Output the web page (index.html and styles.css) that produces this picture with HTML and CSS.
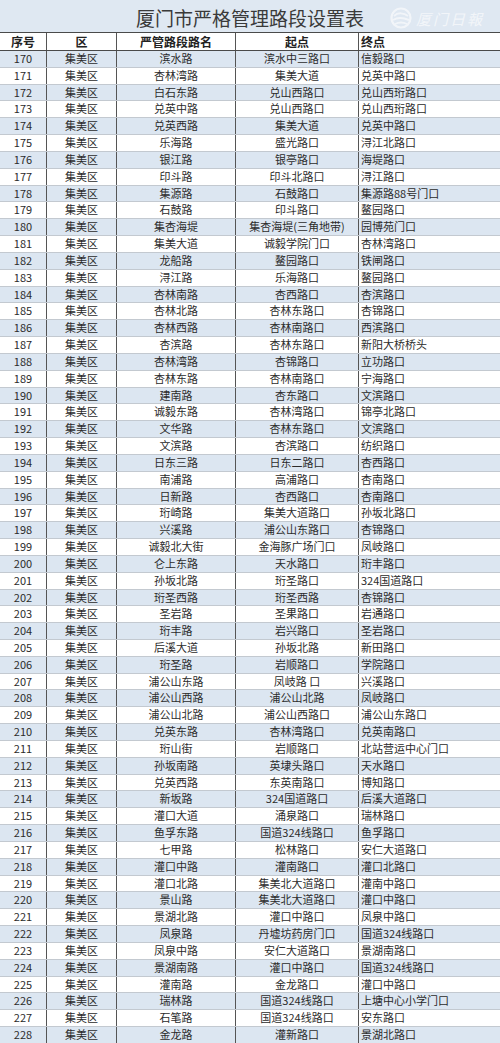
FILE: index.html
```html
<!DOCTYPE html>
<html lang="zh-CN">
<head>
<meta charset="utf-8">
<title>厦门市严格管理路段设置表</title>
<link rel="stylesheet" href="styles.css">
</head>
<body>
<div class="sheet">
  <div class="title-bar">
    <h1 class="title">厦门市严格管理路段设置表</h1>
    <div class="logo">
      <svg class="logo-mark" width="24" height="22" viewBox="0 0 24 22">
        <circle cx="12" cy="11" r="9.5" fill="none" stroke="#ffffff" stroke-width="2.2"/>
        <path d="M5 9 C9 5, 15 6, 19 9" fill="none" stroke="#ffffff" stroke-width="2"/>
        <path d="M4 13 C9 10, 15 11, 20 13" fill="none" stroke="#ffffff" stroke-width="2"/>
        <path d="M6 17 C10 15, 14 15, 18 17" fill="none" stroke="#ffffff" stroke-width="1.8"/>
      </svg>
      <span class="logo-text">厦门日報</span>
    </div>
  </div>
  <div class="row head">
    <div class="c c1">序号</div><div class="c c2">区</div><div class="c c3">严管路段路名</div><div class="c c4">起点</div><div class="c c5">终点</div>
  </div>
  <div class="row alt"><div class="c c1">170</div><div class="c c2">集美区</div><div class="c c3">滨水路</div><div class="c c4">滨水中三路口</div><div class="c c5">信毅路口</div></div>
  <div class="row"><div class="c c1">171</div><div class="c c2">集美区</div><div class="c c3">杏林湾路</div><div class="c c4">集美大道</div><div class="c c5">兑英中路口</div></div>
  <div class="row alt"><div class="c c1">172</div><div class="c c2">集美区</div><div class="c c3">白石东路</div><div class="c c4">兑山西路口</div><div class="c c5">兑山西珩路口</div></div>
  <div class="row"><div class="c c1">173</div><div class="c c2">集美区</div><div class="c c3">兑英中路</div><div class="c c4">兑山西路口</div><div class="c c5">兑山西珩路口</div></div>
  <div class="row alt"><div class="c c1">174</div><div class="c c2">集美区</div><div class="c c3">兑英西路</div><div class="c c4">集美大道</div><div class="c c5">兑英中路口</div></div>
  <div class="row"><div class="c c1">175</div><div class="c c2">集美区</div><div class="c c3">乐海路</div><div class="c c4">盛光路口</div><div class="c c5">浔江北路口</div></div>
  <div class="row alt"><div class="c c1">176</div><div class="c c2">集美区</div><div class="c c3">银江路</div><div class="c c4">银亭路口</div><div class="c c5">海堤路口</div></div>
  <div class="row"><div class="c c1">177</div><div class="c c2">集美区</div><div class="c c3">印斗路</div><div class="c c4">印斗北路口</div><div class="c c5">浔江路口</div></div>
  <div class="row alt"><div class="c c1">178</div><div class="c c2">集美区</div><div class="c c3">集源路</div><div class="c c4">石鼓路口</div><div class="c c5">集源路88号门口</div></div>
  <div class="row"><div class="c c1">179</div><div class="c c2">集美区</div><div class="c c3">石鼓路</div><div class="c c4">印斗路口</div><div class="c c5">鳌园路口</div></div>
  <div class="row alt"><div class="c c1">180</div><div class="c c2">集美区</div><div class="c c3">集杏海堤</div><div class="c c4">集杏海堤(三角地带)</div><div class="c c5">园博苑门口</div></div>
  <div class="row"><div class="c c1">181</div><div class="c c2">集美区</div><div class="c c3">集美大道</div><div class="c c4">诚毅学院门口</div><div class="c c5">杏林湾路口</div></div>
  <div class="row alt"><div class="c c1">182</div><div class="c c2">集美区</div><div class="c c3">龙船路</div><div class="c c4">鳌园路口</div><div class="c c5">铁闸路口</div></div>
  <div class="row"><div class="c c1">183</div><div class="c c2">集美区</div><div class="c c3">浔江路</div><div class="c c4">乐海路口</div><div class="c c5">鳌园路口</div></div>
  <div class="row alt"><div class="c c1">184</div><div class="c c2">集美区</div><div class="c c3">杏林南路</div><div class="c c4">杏西路口</div><div class="c c5">杏滨路口</div></div>
  <div class="row"><div class="c c1">185</div><div class="c c2">集美区</div><div class="c c3">杏林北路</div><div class="c c4">杏林东路口</div><div class="c c5">杏锦路口</div></div>
  <div class="row alt"><div class="c c1">186</div><div class="c c2">集美区</div><div class="c c3">杏林西路</div><div class="c c4">杏林南路口</div><div class="c c5">西滨路口</div></div>
  <div class="row"><div class="c c1">187</div><div class="c c2">集美区</div><div class="c c3">杏滨路</div><div class="c c4">杏林东路口</div><div class="c c5">新阳大桥桥头</div></div>
  <div class="row alt"><div class="c c1">188</div><div class="c c2">集美区</div><div class="c c3">杏林湾路</div><div class="c c4">杏锦路口</div><div class="c c5">立功路口</div></div>
  <div class="row"><div class="c c1">189</div><div class="c c2">集美区</div><div class="c c3">杏林东路</div><div class="c c4">杏林南路口</div><div class="c c5">宁海路口</div></div>
  <div class="row alt"><div class="c c1">190</div><div class="c c2">集美区</div><div class="c c3">建南路</div><div class="c c4">杏东路口</div><div class="c c5">文滨路口</div></div>
  <div class="row"><div class="c c1">191</div><div class="c c2">集美区</div><div class="c c3">诚毅东路</div><div class="c c4">杏林湾路口</div><div class="c c5">锦亭北路口</div></div>
  <div class="row alt"><div class="c c1">192</div><div class="c c2">集美区</div><div class="c c3">文华路</div><div class="c c4">杏林东路口</div><div class="c c5">文滨路口</div></div>
  <div class="row"><div class="c c1">193</div><div class="c c2">集美区</div><div class="c c3">文滨路</div><div class="c c4">杏滨路口</div><div class="c c5">纺织路口</div></div>
  <div class="row alt"><div class="c c1">194</div><div class="c c2">集美区</div><div class="c c3">日东三路</div><div class="c c4">日东二路口</div><div class="c c5">杏西路口</div></div>
  <div class="row"><div class="c c1">195</div><div class="c c2">集美区</div><div class="c c3">南浦路</div><div class="c c4">高浦路口</div><div class="c c5">杏南路口</div></div>
  <div class="row alt"><div class="c c1">196</div><div class="c c2">集美区</div><div class="c c3">日新路</div><div class="c c4">杏西路口</div><div class="c c5">杏南路口</div></div>
  <div class="row"><div class="c c1">197</div><div class="c c2">集美区</div><div class="c c3">珩崎路</div><div class="c c4">集美大道路口</div><div class="c c5">孙坂北路口</div></div>
  <div class="row alt"><div class="c c1">198</div><div class="c c2">集美区</div><div class="c c3">兴溪路</div><div class="c c4">浦公山东路口</div><div class="c c5">杏锦路口</div></div>
  <div class="row"><div class="c c1">199</div><div class="c c2">集美区</div><div class="c c3">诚毅北大街</div><div class="c c4">金海豚广场门口</div><div class="c c5">凤岐路口</div></div>
  <div class="row alt"><div class="c c1">200</div><div class="c c2">集美区</div><div class="c c3">仑上东路</div><div class="c c4">天水路口</div><div class="c c5">珩丰路口</div></div>
  <div class="row"><div class="c c1">201</div><div class="c c2">集美区</div><div class="c c3">孙坂北路</div><div class="c c4">珩圣路口</div><div class="c c5">324国道路口</div></div>
  <div class="row alt"><div class="c c1">202</div><div class="c c2">集美区</div><div class="c c3">珩圣西路</div><div class="c c4">珩圣西路</div><div class="c c5">杏锦路口</div></div>
  <div class="row"><div class="c c1">203</div><div class="c c2">集美区</div><div class="c c3">圣岩路</div><div class="c c4">圣果路口</div><div class="c c5">岩通路口</div></div>
  <div class="row alt"><div class="c c1">204</div><div class="c c2">集美区</div><div class="c c3">珩丰路</div><div class="c c4">岩兴路口</div><div class="c c5">圣岩路口</div></div>
  <div class="row"><div class="c c1">205</div><div class="c c2">集美区</div><div class="c c3">后溪大道</div><div class="c c4">孙坂北路</div><div class="c c5">新田路口</div></div>
  <div class="row alt"><div class="c c1">206</div><div class="c c2">集美区</div><div class="c c3">珩圣路</div><div class="c c4">岩顺路口</div><div class="c c5">学院路口</div></div>
  <div class="row"><div class="c c1">207</div><div class="c c2">集美区</div><div class="c c3">浦公山东路</div><div class="c c4">凤岐路&nbsp;口</div><div class="c c5">兴溪路口</div></div>
  <div class="row alt"><div class="c c1">208</div><div class="c c2">集美区</div><div class="c c3">浦公山西路</div><div class="c c4">浦公山北路</div><div class="c c5">凤岐路口</div></div>
  <div class="row"><div class="c c1">209</div><div class="c c2">集美区</div><div class="c c3">浦公山北路</div><div class="c c4">浦公山西路口</div><div class="c c5">浦公山东路口</div></div>
  <div class="row alt"><div class="c c1">210</div><div class="c c2">集美区</div><div class="c c3">兑英东路</div><div class="c c4">杏林湾路口</div><div class="c c5">兑英南路口</div></div>
  <div class="row"><div class="c c1">211</div><div class="c c2">集美区</div><div class="c c3">珩山街</div><div class="c c4">岩顺路口</div><div class="c c5">北站营运中心门口</div></div>
  <div class="row alt"><div class="c c1">212</div><div class="c c2">集美区</div><div class="c c3">孙坂南路</div><div class="c c4">英埭头路口</div><div class="c c5">天水路口</div></div>
  <div class="row"><div class="c c1">213</div><div class="c c2">集美区</div><div class="c c3">兑英西路</div><div class="c c4">东英南路口</div><div class="c c5">博知路口</div></div>
  <div class="row alt"><div class="c c1">214</div><div class="c c2">集美区</div><div class="c c3">新坂路</div><div class="c c4">324国道路口</div><div class="c c5">后溪大道路口</div></div>
  <div class="row"><div class="c c1">215</div><div class="c c2">集美区</div><div class="c c3">灌口大道</div><div class="c c4">涌泉路口</div><div class="c c5">瑞林路口</div></div>
  <div class="row alt"><div class="c c1">216</div><div class="c c2">集美区</div><div class="c c3">鱼孚东路</div><div class="c c4">国道324线路口</div><div class="c c5">鱼孚路口</div></div>
  <div class="row"><div class="c c1">217</div><div class="c c2">集美区</div><div class="c c3">七甲路</div><div class="c c4">松林路口</div><div class="c c5">安仁大道路口</div></div>
  <div class="row alt"><div class="c c1">218</div><div class="c c2">集美区</div><div class="c c3">灌口中路</div><div class="c c4">灌南路口</div><div class="c c5">灌口北路口</div></div>
  <div class="row"><div class="c c1">219</div><div class="c c2">集美区</div><div class="c c3">灌口北路</div><div class="c c4">集美北大道路口</div><div class="c c5">灌南中路口</div></div>
  <div class="row alt"><div class="c c1">220</div><div class="c c2">集美区</div><div class="c c3">景山路</div><div class="c c4">集美北大道路口</div><div class="c c5">灌口中路口</div></div>
  <div class="row"><div class="c c1">221</div><div class="c c2">集美区</div><div class="c c3">景湖北路</div><div class="c c4">灌口中路口</div><div class="c c5">凤泉中路口</div></div>
  <div class="row alt"><div class="c c1">222</div><div class="c c2">集美区</div><div class="c c3">凤泉路</div><div class="c c4">丹墟坊药房门口</div><div class="c c5">国道324线路口</div></div>
  <div class="row"><div class="c c1">223</div><div class="c c2">集美区</div><div class="c c3">凤泉中路</div><div class="c c4">安仁大道路口</div><div class="c c5">景湖南路口</div></div>
  <div class="row alt"><div class="c c1">224</div><div class="c c2">集美区</div><div class="c c3">景湖南路</div><div class="c c4">灌口中路口</div><div class="c c5">国道324线路口</div></div>
  <div class="row"><div class="c c1">225</div><div class="c c2">集美区</div><div class="c c3">灌南路</div><div class="c c4">金龙路口</div><div class="c c5">灌口中路口</div></div>
  <div class="row alt"><div class="c c1">226</div><div class="c c2">集美区</div><div class="c c3">瑞林路</div><div class="c c4">国道324线路口</div><div class="c c5">上塘中心小学门口</div></div>
  <div class="row"><div class="c c1">227</div><div class="c c2">集美区</div><div class="c c3">石笔路</div><div class="c c4">国道324线路口</div><div class="c c5">安东路口</div></div>
  <div class="row alt"><div class="c c1">228</div><div class="c c2">集美区</div><div class="c c3">金龙路</div><div class="c c4">灌新路口</div><div class="c c5">景湖北路口</div></div>
</div>
</body>
</html>
```

FILE: styles.css
```css
html, body {
  margin: 0;
  padding: 0;
  background: #ffffff;
}

body {
  font-family: "Noto Sans CJK SC", "Noto Sans", sans-serif;
  color: #2b2b2b;
  width: 500px;
  overflow: hidden;
}

.sheet {
  width: 500px;
  display: flex;
  flex-direction: column;
}

.title-bar {
  height: 33px;
  box-sizing: border-box;
  background: #dfe8f2;
  border-bottom: 1px solid #4a4a4a;
  display: flex;
  align-items: center;
  justify-content: center;
  position: relative;
}

.title {
  margin: 0;
  font-size: 19px;
  font-weight: 400;
  line-height: 1;
  color: #3a3a3a;
  letter-spacing: 0;
  padding-top: 2px;
}

.logo {
  position: absolute;
  left: 389px;
  top: 7px;
  display: flex;
  align-items: center;
  gap: 3px;
  opacity: 0.6;
}

.logo-mark {
  display: block;
}

.logo-text {
  font-size: 15px;
  font-style: italic;
  color: #ffffff;
  letter-spacing: 2px;
  line-height: 1;
}

.row {
  display: grid;
  grid-template-columns: 46px 70px 119px 123px 142px;
  height: 16.83px;
  box-sizing: border-box;
  border-bottom: 1px solid #c3c9d0;
  background: #ffffff;
}

.row.alt {
  background: #dce6f1;
}

.row.head {
  height: 18px;
  border-bottom: 1px solid #4a4a4a;
}

.c {
  font-size: 11px;
  line-height: 15.8px;
  white-space: nowrap;
  overflow: hidden;
  text-align: center;
}

.head .c {
  font-size: 12px;
  font-weight: 700;
  line-height: 17px;
  color: #222222;
}

.c2, .c3, .c4, .c5 {
  border-left: 1px solid #555555;
}

.c5 {
  text-align: left;
  padding-left: 2px;
}
```
